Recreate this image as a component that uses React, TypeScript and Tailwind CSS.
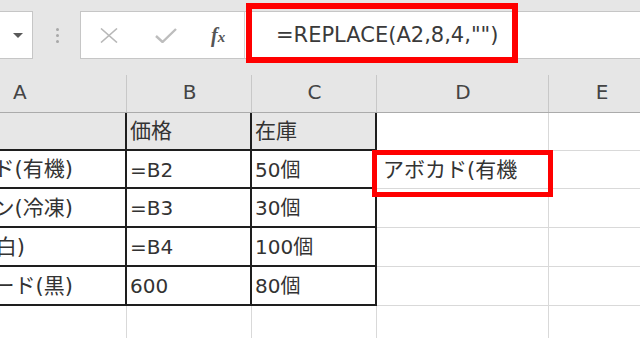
import React from "react";

const FONT = '"DejaVu Sans", "Noto Sans CJK JP", sans-serif';

function TopBar() {
  return (
    <div className="relative h-[70px] bg-[#e6e6e6] pt-[11px] flex items-start">
      {/* Name box */}
      <div className="w-[33px] h-[48px] bg-white border border-l-0 border-[#c6c6c6] flex items-center justify-end pr-[9px]">
        <div className="w-0 h-0 border-l-[5px] border-r-[5px] border-t-[5px] border-l-transparent border-r-transparent border-t-[#595959]" />
      </div>
      {/* Dots */}
      <div className="w-[47px] h-[48px] flex flex-col items-center justify-center gap-[3px] pl-[1px]">
        <div className="w-[3px] h-[3px] rounded-full bg-[#a8a8a8]" />
        <div className="w-[3px] h-[3px] rounded-full bg-[#a8a8a8]" />
        <div className="w-[3px] h-[3px] rounded-full bg-[#a8a8a8]" />
      </div>
      {/* Formula box */}
      <div className="flex-1 h-[48px] bg-white border border-r-0 border-[#c6c6c6] flex items-center">
        <div className="w-[164px] h-full flex items-center border-r border-[#d4d4d4]">
          <svg width="18" height="15" viewBox="0 0 18 15" className="ml-[19px]">
            <path d="M1 0.5 L17 14.5 M17 0.5 L1 14.5" stroke="#b8b8b8" strokeWidth="1.6" fill="none" />
          </svg>
          <svg width="22" height="15" viewBox="0 0 22 15" className="ml-[37px]">
            <path d="M1 8 L7.5 14 L21 1" stroke="#bdbdbd" strokeWidth="2.4" fill="none" />
          </svg>
          <span
            className="ml-[34px] text-[#555] italic font-bold leading-none"
            style={{ fontFamily: '"Liberation Serif", serif' }}
          >
            <span className="text-[20px]">f</span>
            <span className="text-[15px]">x</span>
          </span>
        </div>
        <div className="pl-[31px] text-[21px] text-[#3a3a3a] whitespace-nowrap leading-none">
          =REPLACE(A2,8,4,"")
        </div>
      </div>
      {/* Red annotation */}
      <div className="absolute left-[246px] top-[3px] w-[272px] h-[60px] border-[6px] border-[#ff0000]" />
    </div>
  );
}

function Header() {
  const cols = [
    { l: "A", w: "w-[127px]", extra: "justify-start pl-[13px]" },
    { l: "B", w: "w-[125px]", extra: "justify-center" },
    { l: "C", w: "w-[125px]", extra: "justify-center" },
    { l: "D", w: "w-[172px]", extra: "justify-center" },
    { l: "E", w: "w-[106px]", extra: "justify-center" },
  ];
  return (
    <div className="h-[43px] bg-[#e6e6e6] border-b border-[#ababab] flex">
      {cols.map((c) => (
        <div key={c.l} className={`${c.w} shrink-0 h-full relative flex items-center ${c.extra}`}>
          <span className="text-[20px] text-[#444] leading-none pt-[1px]">{c.l}</span>
          <div className="absolute right-0 top-[5px] bottom-0 w-px bg-[#c8c8c8]" />
        </div>
      ))}
    </div>
  );
}

type Row = { a: string; apr: string; b: string; c: string; d: string; h: string; gray?: boolean };

const rows: Row[] = [
  { a: "", apr: "pr-[52px]", b: "価格", c: "在庫", d: "", h: "h-[38px]", gray: true },
  { a: "アボカド(有機)", apr: "pr-[52px]", b: "=B2", c: "50個", d: "アボカド(有機", h: "h-[38px]" },
  { a: "ニンジン(冷凍)", apr: "pr-[52px]", b: "=B3", c: "30個", d: "", h: "h-[39px]" },
  { a: "ゴマ油(白)", apr: "pr-[100px]", b: "=B4", c: "100個", d: "", h: "h-[39px]" },
  { a: "コーヒーコード(黒)", apr: "pr-[52px]", b: "600", c: "80個", d: "", h: "h-[39px]" },
];

function Body() {
  return (
    <div className="flex flex-col">
      {rows.map((r, i) => {
        const bg = r.gray ? "bg-[#e7e7e7]" : "bg-white";
        const txt = "text-[20px] text-[#333] leading-none whitespace-nowrap";
        const jp = "text-[21px] text-[#333] leading-none whitespace-nowrap";
        return (
          <div key={i} className={`${r.h} flex`}>
            <div className={`w-[127px] shrink-0 h-full ${bg} border-r-2 border-b-2 border-[#1e1e1e] overflow-hidden flex items-center justify-end ${r.apr} pt-[1px]`}>
              <span className={jp}>{r.a}</span>
            </div>
            <div className={`w-[125px] shrink-0 h-full ${bg} border-r-2 border-b-2 border-[#1e1e1e] flex items-center pl-[3px] pt-[1px]`}>
              <span className={i === 0 ? jp : txt}>{r.b}</span>
            </div>
            <div className={`w-[125px] shrink-0 h-full ${bg} border-r-2 border-b-2 border-[#1e1e1e] flex items-center pl-[3px] pt-[1px]`}>
              <span className={i === 0 ? jp : txt}>{r.c}</span>
            </div>
            <div className="w-[172px] shrink-0 h-full bg-white border-r border-b border-[#d9d9d9] flex items-center pl-[6px] pt-[1px]">
              <span className={jp}>{r.d}</span>
            </div>
            <div className="w-[106px] shrink-0 h-full bg-white border-r border-b border-[#d9d9d9]" />
          </div>
        );
      })}
      <div className="h-[40px] flex">
        <div className="w-[127px] shrink-0 h-full border-r border-[#d9d9d9]" />
        <div className="w-[125px] shrink-0 h-full border-r border-[#d9d9d9]" />
        <div className="w-[125px] shrink-0 h-full border-r border-[#d9d9d9]" />
        <div className="w-[172px] shrink-0 h-full border-r border-[#d9d9d9]" />
        <div className="w-[106px] shrink-0 h-full" />
      </div>
    </div>
  );
}

export default function App() {
  return (
    <div className="relative w-[640px] h-[338px] overflow-hidden bg-white" style={{ fontFamily: FONT }}>
      <TopBar />
      <Header />
      <Body />
      {/* Red annotation around D2 */}
      <div className="absolute left-[372px] top-[150px] w-[181px] h-[47px] border-[5px] border-[#ff0000]" />
    </div>
  );
}
